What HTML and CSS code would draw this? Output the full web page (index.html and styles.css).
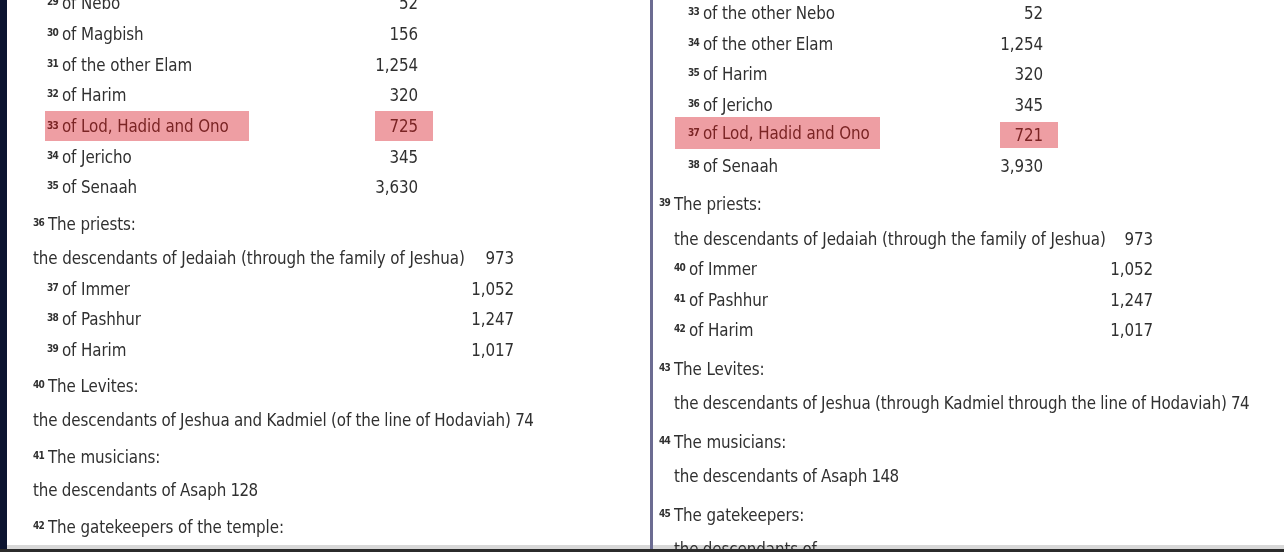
FILE: index.html
```html
<!DOCTYPE html>
<html>
<head>
<meta charset="utf-8">
<link rel="stylesheet" href="styles.css">
</head>
<body>
<div class="screen">
  <div class="edge"></div>
  <section class="col col-left">
    <div class="list">
      <div class="row"><span class="name"><sup>29</sup>of Nebo</span><span class="num">52</span></div>
      <div class="row"><span class="name"><sup>30</sup>of Magbish</span><span class="num">156</span></div>
      <div class="row"><span class="name"><sup>31</sup>of the other Elam</span><span class="num">1,254</span></div>
      <div class="row"><span class="name"><sup>32</sup>of Harim</span><span class="num">320</span></div>
      <div class="row hl"><span class="name mark"><sup>33</sup>of Lod, Hadid and Ono</span><span class="num mark">725</span></div>
      <div class="row"><span class="name"><sup>34</sup>of Jericho</span><span class="num">345</span></div>
      <div class="row"><span class="name"><sup>35</sup>of Senaah</span><span class="num">3,630</span></div>
    </div>
    <p class="head"><sup>36</sup>The priests:</p>
    <div class="list wide">
      <div class="row lead"><span class="name">the descendants of Jedaiah (through the family of Jeshua)</span><span class="num">973</span></div>
      <div class="row"><span class="name"><sup>37</sup>of Immer</span><span class="num">1,052</span></div>
      <div class="row"><span class="name"><sup>38</sup>of Pashhur</span><span class="num">1,247</span></div>
      <div class="row"><span class="name"><sup>39</sup>of Harim</span><span class="num">1,017</span></div>
    </div>
    <p class="head"><sup>40</sup>The Levites:</p>
    <p class="line">the descendants of Jeshua and Kadmiel (of the line of Hodaviah) <span class="n">74</span></p>
    <p class="head"><sup>41</sup>The musicians:</p>
    <p class="line">the descendants of Asaph <span class="n">128</span></p>
    <p class="head"><sup>42</sup>The gatekeepers of the temple:</p>
  </section>
  <div class="divider"></div>
  <section class="col col-right">
    <div class="list">
      <div class="row"><span class="name"><sup>33</sup>of the other Nebo</span><span class="num">52</span></div>
      <div class="row"><span class="name"><sup>34</sup>of the other Elam</span><span class="num">1,254</span></div>
      <div class="row"><span class="name"><sup>35</sup>of Harim</span><span class="num">320</span></div>
      <div class="row"><span class="name"><sup>36</sup>of Jericho</span><span class="num">345</span></div>
      <div class="row hl"><span class="name mark"><sup>37</sup>of Lod, Hadid and Ono</span><span class="num mark">721</span></div>
      <div class="row"><span class="name"><sup>38</sup>of Senaah</span><span class="num">3,930</span></div>
    </div>
    <p class="head"><sup>39</sup>The priests:</p>
    <div class="list wide">
      <div class="row lead"><span class="name">the descendants of Jedaiah (through the family of Jeshua)</span><span class="num">973</span></div>
      <div class="row"><span class="name"><sup>40</sup>of Immer</span><span class="num">1,052</span></div>
      <div class="row"><span class="name"><sup>41</sup>of Pashhur</span><span class="num">1,247</span></div>
      <div class="row"><span class="name"><sup>42</sup>of Harim</span><span class="num">1,017</span></div>
    </div>
    <p class="head"><sup>43</sup>The Levites:</p>
    <p class="line">the descendants of Jeshua (through Kadmiel through the line of Hodaviah) <span class="n">74</span></p>
    <p class="head"><sup>44</sup>The musicians:</p>
    <p class="line">the descendants of Asaph <span class="n">148</span></p>
    <p class="head"><sup>45</sup>The gatekeepers:</p>
    <p class="line">the descendants of</p>
  </section>
</div>
</body>
</html>
```

FILE: styles.css
```css
* { box-sizing: border-box; }
html, body { margin: 0; padding: 0; background: #ffffff; }
body { width: 1284px; height: 552px; overflow: hidden; }

.screen {
  display: flex;
  height: 552px;
  background: #ffffff;
  border-bottom: 3px solid #2b2b2b;
  box-shadow: inset 0 -4px 0 #d8d8d8;
  overflow: hidden;
  font-family: "DejaVu Sans Condensed", "DejaVu Sans", sans-serif;
  font-stretch: condensed;
  font-size: 16.8px;
  letter-spacing: -0.08px;
  color: #303030;
}

.edge { width: 7px; flex: none; background: #0c1430; }

.divider { width: 3px; flex: none; background: #6c6c92; }

.col { overflow: hidden; filter: blur(0.3px); }
.col-left { width: 643px; flex: none; padding-left: 26px; margin-top: -12px; --row: 30.7px; --head-gap: 6px; --after-head: 3px; --list-w: 385px; --wide-w: 481px; --indent: 14px; }
.col-right { flex: 1; padding-left: 6px; margin-top: -2px; --row: 30.5px; --head-gap: 8px; --after-head: 4px; --list-w: 384px; --wide-w: 494px; --indent: 29px; }

p { margin: 0; }

.list { display: flex; flex-direction: column; width: var(--list-w); }
.list.wide { width: var(--wide-w); }

.row { display: flex; justify-content: space-between; align-items: center; height: var(--row); padding-left: var(--indent); }
.row.lead { padding-left: 0; margin-top: var(--after-head); }
.col-right .row.lead { padding-left: 15px; }
.col-right .list.wide .row:not(.lead) { padding-left: 15px; }

.head { height: var(--row); line-height: var(--row); margin-top: var(--head-gap); }
.line { height: var(--row); line-height: var(--row); margin-top: var(--after-head); word-spacing: -0.4px; }
.col-right .line { padding-left: 15px; }

.n { letter-spacing: -0.6px; }

sup {
  font-size: 10px;
  font-weight: bold;
  vertical-align: 4px;
  line-height: 0;
  margin-right: 4px;
  letter-spacing: -0.8px;
}

.mark {
  background: #ee9ea3;
  color: #7a2424;
  height: 30px;
  display: inline-flex;
  align-items: center;
}
.name.mark { margin-left: -2px; padding: 0 20px 0 2px; }
.num.mark { padding: 0 15px 0 14px; margin-right: -15px; }
.col-right .name.mark { margin-left: -13px; padding: 0 10px 0 13px; height: 32px; margin-bottom: 5px; }
.col-right .num.mark { height: 26px; margin-top: 0; }
```
